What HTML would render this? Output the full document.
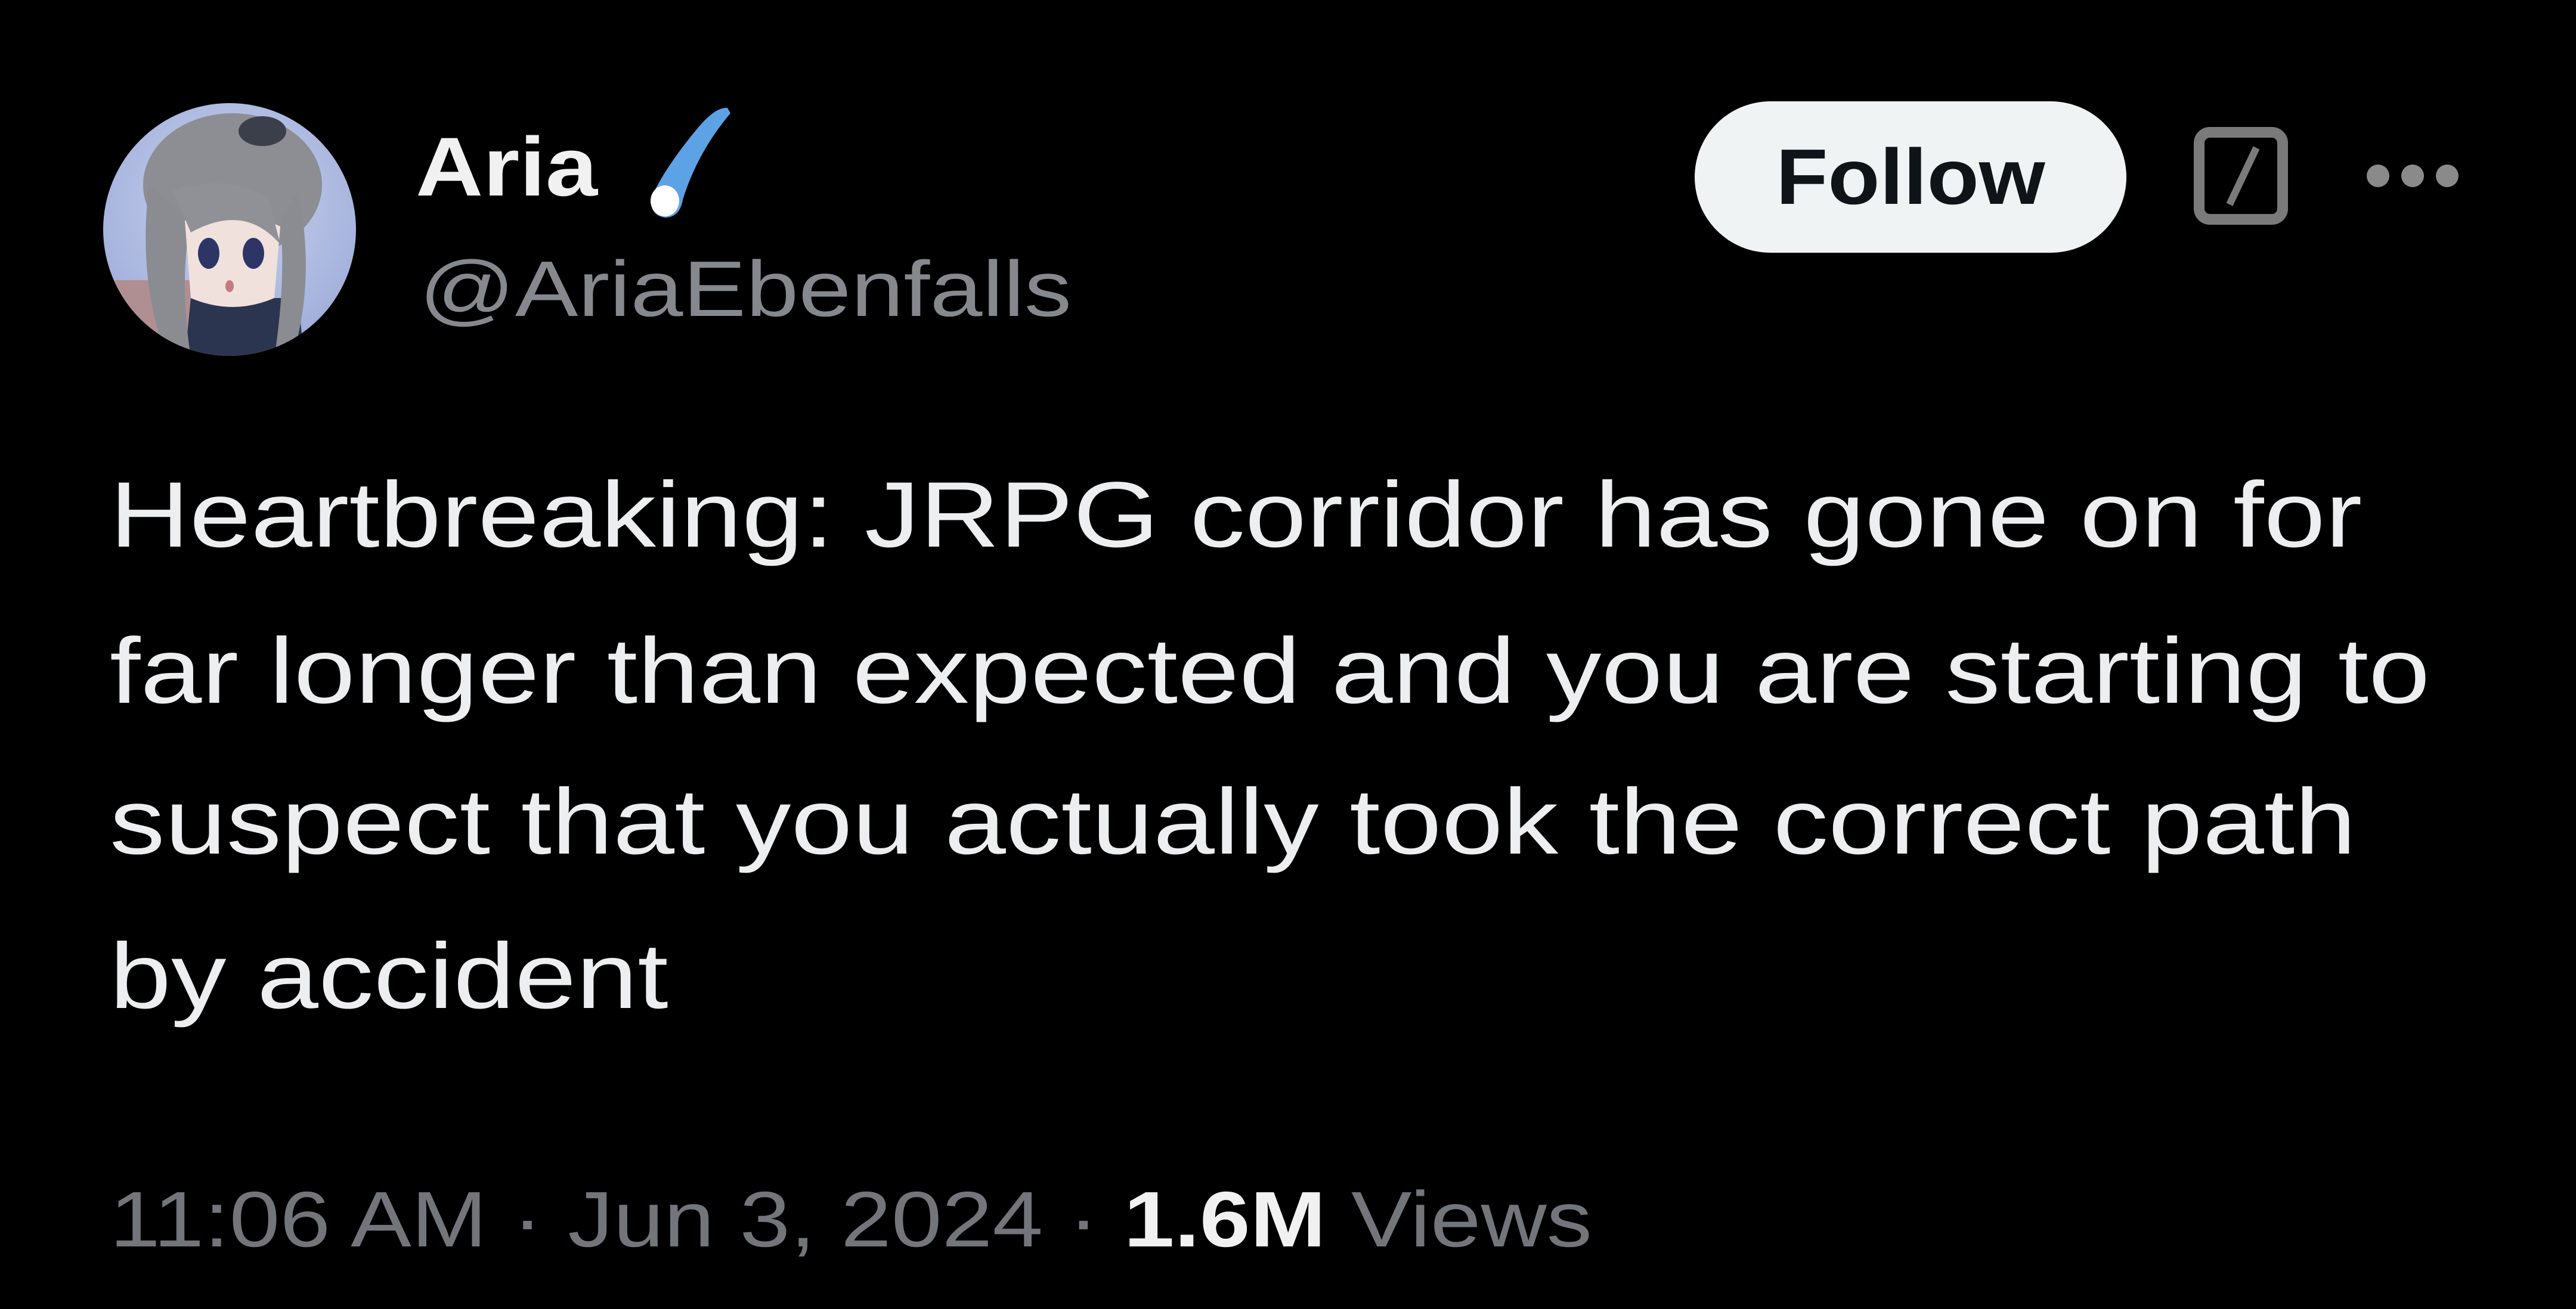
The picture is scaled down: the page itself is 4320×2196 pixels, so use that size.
<!DOCTYPE html>
<html><head><meta charset="utf-8"><style>
html,body{margin:0;padding:0;background:#000;}
body{width:4320px;height:2196px;position:relative;overflow:hidden;font-family:"Liberation Sans",sans-serif;}
.abs{position:absolute;white-space:nowrap;transform-origin:0 0;}
.name{left:697px;top:200px;font-size:140px;font-weight:bold;color:#f1f1f1;line-height:160px;transform:scaleX(1.12);}
.handle{left:703px;top:405px;font-size:132px;color:#85898e;line-height:160px;transform:scaleX(1.2);}
.body{left:184px;font-size:156px;color:#eceeef;line-height:180px;transform:scaleX(1.187);}
.foot{left:184px;top:1966px;font-size:132px;color:#72767b;line-height:160px;transform:scaleX(1.155);}
.foot b{color:#f1f1f1;}
.follow{left:2842px;top:170px;width:724px;height:254px;border-radius:127px;background:#eff3f4;color:#0f1419;font-weight:bold;font-size:132px;text-align:center;line-height:254px;}
.follow span{display:inline-block;transform:scaleX(1.08);}
</style></head><body>
<svg class="abs" style="left:170px;top:170px" width="430" height="430" viewBox="0 0 430 430">
<defs><clipPath id="c"><circle cx="215" cy="215" r="212"/></clipPath>
<radialGradient id="bg" cx="0.5" cy="0.4" r="0.7"><stop offset="0" stop-color="#c9d3ec"/><stop offset="1" stop-color="#9aa8d8"/></radialGradient></defs>
<g clip-path="url(#c)">
<rect width="430" height="430" fill="url(#bg)"/>
<rect x="0" y="300" width="200" height="130" fill="#b08f92"/>
<path d="M150 330 L330 330 L340 430 L140 430Z" fill="#2c3550"/>
<ellipse cx="220" cy="140" rx="150" ry="120" fill="#8c8e93"/>
<path d="M80 140 Q60 300 110 430 L150 430 Q130 300 150 200Z" fill="#8a8c92"/>
<path d="M330 150 Q360 300 320 430 L290 430 Q310 300 300 200Z" fill="#8a8c92"/>
<path d="M140 200 Q220 170 300 210 L290 330 Q220 360 150 330Z" fill="#f1e1dc"/>
<path d="M120 150 Q200 120 280 160 L300 240 Q240 170 150 220Z" fill="#8f9196"/>
<ellipse cx="180" cy="255" rx="18" ry="26" fill="#2d3566"/>
<ellipse cx="255" cy="255" rx="18" ry="26" fill="#2d3566"/>
<ellipse cx="215" cy="310" rx="7" ry="10" fill="#c47a7f"/>
<ellipse cx="270" cy="50" rx="40" ry="25" fill="#3b3f4a"/>
</g></svg>
<div class="abs name">Aria</div>
<svg class="abs" style="left:1060px;top:175px" width="170" height="200" viewBox="0 0 170 200">
<path d="M160 6 Q140 4 110 40 Q60 100 35 150 Q25 185 55 190 Q80 190 85 160 Q110 80 165 15Z" fill="#5ea2e6"/>
<ellipse cx="55" cy="162" rx="24" ry="26" fill="#fff"/>
</svg>
<div class="abs handle">@AriaEbenfalls</div>
<div class="abs follow"><span>Follow</span></div>
<svg class="abs" style="left:3679px;top:213px" width="158" height="164" viewBox="0 0 158 164">
<rect x="9" y="9" width="140" height="146" rx="18" fill="none" stroke="#7a7a7a" stroke-width="18"/>
<path d="M105 35 L60 130" stroke="#7a7a7a" stroke-width="12"/>
</svg>
<svg class="abs" style="left:3966px;top:272px" width="160" height="46" viewBox="0 0 160 46">
<circle cx="22" cy="23" r="19" fill="#8a8a8a"/><circle cx="80" cy="23" r="19" fill="#8a8a8a"/><circle cx="138" cy="23" r="19" fill="#8a8a8a"/>
</svg>
<div class="abs body" style="top:774px">Heartbreaking: JRPG corridor has gone on for</div>
<div class="abs body" style="top:1036px">far longer than expected and you are starting to</div>
<div class="abs body" style="top:1289px">suspect that you actually took the correct path</div>
<div class="abs body" style="top:1548px">by accident</div>
<div class="abs foot">11:06 AM · Jun 3, 2024 · <b>1.6M</b> Views</div>
</body></html>
